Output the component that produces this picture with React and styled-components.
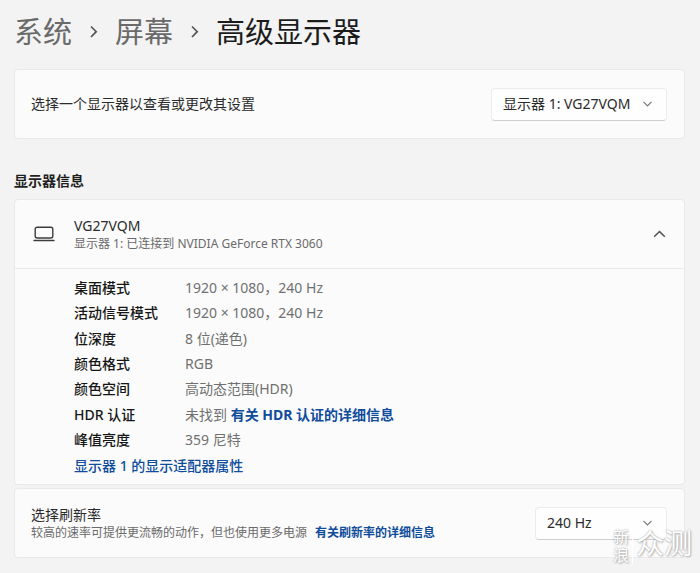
import styled, { createGlobalStyle } from "styled-components";

const GlobalStyle = createGlobalStyle`
  * {
    box-sizing: border-box;
  }

  body {
    margin: 0;
    background: #f3f3f3;
    color: #2b2b2b;
    font-family: "Noto Sans", "Noto Sans CJK SC", sans-serif;
    font-size: 14px;
    line-height: 20px;
  }
`;

const Page = styled.main`
  position: relative;
  padding: 12px 15px 16px 14px;
`;

const Breadcrumb = styled.nav`
  display: flex;
  align-items: center;
  gap: 16px;
  margin-bottom: 17px;
  color: #6a6a6a;
  font-size: 29px;
  line-height: 40px;

  a {
    color: inherit;
    text-decoration: none;
  }

  h1 {
    margin: 0;
    color: #1c1c1c;
    font-size: 29px;
    font-weight: 400;
  }
`;

const Card = styled.section`
  background: #fbfbfb;
  border: 1px solid #e9e9e9;
  border-radius: 4px;
  margin-bottom: 3px;
`;

const CardRow = styled.div`
  display: flex;
  align-items: center;
  justify-content: space-between;
  min-height: 68px;
  padding: 0 17px 0 16px;
`;

const SectionTitle = styled.h2`
  margin: 32px 0 8px;
  color: #1f1f1f;
  font-size: 14px;
  font-weight: 600;
  line-height: 20px;
`;

const TextBlock = styled.div`
  display: flex;
  flex-direction: column;
  flex: 1;
`;

const Caption = styled.span`
  color: #6a6a6a;
  font-size: 12px;
  line-height: 16px;

  a {
    margin-left: 8px;
  }
`;

const SelectWrap = styled.div`
  display: grid;
  align-items: center;
  width: ${({ $width }) => $width};

  select,
  svg {
    grid-area: 1 / 1;
  }

  svg {
    justify-self: end;
    margin-right: 15px;
    pointer-events: none;
  }
`;

const Select = styled.select`
  appearance: none;
  width: 100%;
  height: 33px;
  padding: 0 32px 0 11px;
  background: #fefefe;
  border: 1px solid #ececec;
  border-bottom-color: #cfcfcf;
  border-radius: 4px;
  color: #2b2b2b;
  font: inherit;
`;

const HeaderButton = styled.button`
  display: flex;
  align-items: center;
  width: 100%;
  min-height: 69px;
  padding: 0 18px;
  background: none;
  border: 0;
  border-bottom: 1px solid #e9e9e9;
  color: inherit;
  font: inherit;
  text-align: left;
  cursor: pointer;

  ${TextBlock} {
    margin-left: 19px;
  }
`;

const Details = styled.div`
  padding: 6px 16px 6px 59px;
`;

const InfoTable = styled.table`
  height: 178px;
  border-collapse: collapse;

  th,
  td {
    padding: 0;
    font-weight: 400;
    text-align: left;
    white-space: nowrap;
  }

  th {
    width: 111px;
    color: #161616;
    font-weight: 500;
  }

  td {
    color: #707070;
  }
`;

const Link = styled.a`
  color: #0f4c9c;
  font-weight: ${({ $bold }) => ($bold ? 700 : 500)};
  text-decoration: none;
`;

const AdapterLine = styled.div`
  line-height: 25px;
`;

const Watermark = styled.div`
  position: absolute;
  right: 8px;
  bottom: 12px;
  display: flex;
  align-items: center;
  gap: 3px;
  color: #ffffff;
  text-shadow: 0 0 2px #a0a0a0, 1px 1px 2px #bbbbbb;
  pointer-events: none;
`;

const WatermarkSide = styled.span`
  width: 20px;
  border-right: 1px solid #ffffff;
  font-size: 16px;
  line-height: 18px;
`;

const WatermarkMain = styled.span`
  padding-bottom: 6px;
  font-size: 28px;
  line-height: 32px;
`;

const details = [
  { label: "桌面模式", value: "1920 × 1080，240 Hz" },
  { label: "活动信号模式", value: "1920 × 1080，240 Hz" },
  { label: "位深度", value: "8 位(递色)" },
  { label: "颜色格式", value: "RGB" },
  { label: "颜色空间", value: "高动态范围(HDR)" },
  { label: "HDR 认证", value: "未找到", link: "有关 HDR 认证的详细信息" },
  { label: "峰值亮度", value: "359 尼特" },
];

const CrumbArrow = () => (
  <svg width="11" height="14" viewBox="0 0 11 14" fill="none" stroke="#555555" strokeWidth="1.7">
    <path d="M3 1.5 8.2 6.7 3 12" />
  </svg>
);

const ChevronDown = () => (
  <svg width="9" height="6" viewBox="0 0 9 6" fill="none" stroke="#777777" strokeWidth="1.2">
    <path d="M.5 .8 4.5 4.8 8.5 .8" />
  </svg>
);

const ChevronUp = () => (
  <svg width="13" height="8" viewBox="0 0 13 8" fill="none" stroke="#505050" strokeWidth="1.5">
    <path d="M1.2 6.8 6.5 1.5 11.8 6.8" />
  </svg>
);

const LaptopIcon = () => (
  <svg width="22" height="16" viewBox="0 0 22 16" fill="none" stroke="#3c3c3c" strokeWidth="1.4">
    <rect x="2.2" y="1.2" width="17.6" height="10.8" rx="2" />
    <path d="M1 14.5h20" strokeLinecap="round" />
  </svg>
);

const App = () => {
  return (
    <>
      <GlobalStyle />
      <Page>
        <Breadcrumb>
          <a href="#system">系统</a>
          <CrumbArrow />
          <a href="#display">屏幕</a>
          <CrumbArrow />
          <h1>高级显示器</h1>
        </Breadcrumb>

        <Card>
          <CardRow>
            <label htmlFor="display">选择一个显示器以查看或更改其设置</label>
            <SelectWrap $width="176px">
              <Select id="display">
                <option>显示器 1: VG27VQM</option>
              </Select>
              <ChevronDown />
            </SelectWrap>
          </CardRow>
        </Card>

        <SectionTitle>显示器信息</SectionTitle>

        <Card>
          <HeaderButton type="button" aria-expanded="true">
            <LaptopIcon />
            <TextBlock>
              <span>VG27VQM</span>
              <Caption>显示器 1: 已连接到 NVIDIA GeForce RTX 3060</Caption>
            </TextBlock>
            <ChevronUp />
          </HeaderButton>
          <Details>
            <InfoTable>
              <tbody>
                {details.map(({ label, value, link }) => (
                  <tr key={label}>
                    <th scope="row">{label}</th>
                    <td>
                      {value} {link && <Link $bold href="#hdr">{link}</Link>}
                    </td>
                  </tr>
                ))}
              </tbody>
            </InfoTable>
            <AdapterLine>
              <Link href="#adapter">显示器 1 的显示适配器属性</Link>
            </AdapterLine>
          </Details>
        </Card>

        <Card>
          <CardRow>
            <TextBlock>
              <label htmlFor="rate">选择刷新率</label>
              <Caption>
                较高的速率可提供更流畅的动作，但也使用更多电源
                <Link $bold href="#rate">有关刷新率的详细信息</Link>
              </Caption>
            </TextBlock>
            <SelectWrap $width="132px">
              <Select id="rate">
                <option>240 Hz</option>
              </Select>
              <ChevronDown />
            </SelectWrap>
          </CardRow>
        </Card>

        <Watermark>
          <WatermarkSide>新浪</WatermarkSide>
          <WatermarkMain>众测</WatermarkMain>
        </Watermark>
      </Page>
    </>
  );
};

export default App;
